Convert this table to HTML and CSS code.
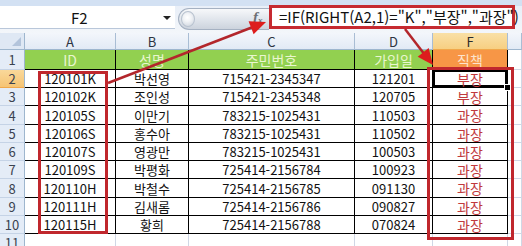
FILE: index.html
```html
<!DOCTYPE html>
<html lang="ko">
<head>
<meta charset="utf-8">
<title>직책 수식</title>
<link rel="stylesheet" href="styles.css">
</head>
<body>
<div class="sheet">
  <div class="formula-bar">
    <div class="name-box"><span class="ref">F2</span><span class="caret"></span></div>
    <div class="fx-btn"><span class="knob"></span><span class="fx">f<sub>x</sub></span></div>
    <div class="formula">=IF(RIGHT(A2,1)="K","부장","과장")</div>
  </div>

  <div class="grid">
    <div class="corner"></div>
    <div class="hd">A</div><div class="hd">B</div><div class="hd">C</div><div class="hd">D</div><div class="hd sel">F</div><div class="hd"></div>

    <div class="rh">1</div>
    <div class="c g">ID</div><div class="c g">성명</div><div class="c g">주민번호</div><div class="c g">가입일</div><div class="c o">직책</div><div class="e"></div>

    <div class="rh sel">2</div>
    <div class="c">120101K</div><div class="c">박선영</div><div class="c">715421-2345347</div><div class="c">121201</div><div class="c r active">부장</div><div class="e"></div>

    <div class="rh">3</div>
    <div class="c">120102K</div><div class="c">조인성</div><div class="c">715421-2345348</div><div class="c">120705</div><div class="c r">부장</div><div class="e"></div>

    <div class="rh">4</div>
    <div class="c">120105S</div><div class="c">이만기</div><div class="c">783215-1025431</div><div class="c">110503</div><div class="c r">과장</div><div class="e"></div>

    <div class="rh">5</div>
    <div class="c">120106S</div><div class="c">홍수아</div><div class="c">783215-1025431</div><div class="c">110502</div><div class="c r">과장</div><div class="e"></div>

    <div class="rh">6</div>
    <div class="c">120107S</div><div class="c">영광만</div><div class="c">783215-1025431</div><div class="c">100503</div><div class="c r">과장</div><div class="e"></div>

    <div class="rh">7</div>
    <div class="c">120109S</div><div class="c">박평화</div><div class="c">725414-2156784</div><div class="c">100923</div><div class="c r">과장</div><div class="e"></div>

    <div class="rh">8</div>
    <div class="c">120110H</div><div class="c">박철수</div><div class="c">725414-2156785</div><div class="c">091130</div><div class="c r">과장</div><div class="e"></div>

    <div class="rh">9</div>
    <div class="c">120111H</div><div class="c">김새롬</div><div class="c">725414-2156786</div><div class="c">090827</div><div class="c r">과장</div><div class="e"></div>

    <div class="rh">10</div>
    <div class="c">120115H</div><div class="c">황희</div><div class="c">725414-2156788</div><div class="c">070824</div><div class="c r">과장</div><div class="e"></div>

    <div class="rh">11</div>
    <div class="e"></div><div class="e"></div><div class="e"></div><div class="e"></div><div class="e"></div><div class="e"></div>
  </div>

  <!-- annotation boxes around the ID column and the result column -->
  <div class="callout callout-id"></div>
  <div class="callout callout-result"></div>

  <svg class="arrows" width="522" height="246" viewBox="0 0 522 246">
    <line x1="108" y1="83" x2="253" y2="27" class="shaft"/>
    <polygon points="266,22 253.6,34.3 248.6,21.3" class="head"/>
    <line x1="405" y1="29" x2="425" y2="55" class="shaft"/>
    <polygon points="433,65 428.7,48.1 417.7,56.7" class="head"/>
  </svg>
</div>
</body>
</html>
```

FILE: styles.css
```css
html, body {
  margin: 0;
  padding: 0;
  background: #ffffff;
}

.sheet {
  position: relative;
  width: 522px;
  height: 246px;
  overflow: hidden;
  font-family: "Noto Sans CJK KR", "Noto Sans", sans-serif;
  background: #ffffff;
}

/* ---------- formula bar ---------- */
.formula-bar {
  display: flex;
  align-items: flex-start;
  height: 33px;
  background: linear-gradient(#d3e1f3 0, #d3e1f3 6px, #e9eff8 6px, #f3f6fa 100%);
}

.name-box {
  position: relative;
  width: 175px;
  height: 23px;
  margin-top: 6px;
  background: #ffffff;
  border-bottom: 1px solid #b9c7da;
  box-sizing: border-box;
  display: flex;
  align-items: center;
}

.name-box .ref {
  margin-left: 71px;
  font-size: 15px;
  color: #111;
  line-height: 1;
}

.name-box .caret {
  position: absolute;
  left: 163px;
  top: 10px;
  width: 0;
  height: 0;
  border-left: 4px solid transparent;
  border-right: 4px solid transparent;
  border-top: 4px solid #222;
}

.fx-btn {
  position: relative;
  width: 91px;
  height: 22px;
  margin-top: 8px;
  margin-left: 3px;
  box-sizing: border-box;
  border: 1px solid #a5b1c2;
  border-right: none;
  border-radius: 11px 0 0 11px;
  background: linear-gradient(#f7f8fa, #dfe4eb 55%, #ccd3dd);
}

.fx-btn .knob {
  position: absolute;
  left: 2px;
  top: 2px;
  width: 14px;
  height: 16px;
  border-radius: 50%;
  background: radial-gradient(circle at 45% 40%, #ffffff 0, #f2f4f7 35%, #c9d0da 100%);
  border: 1px solid #b8c2cf;
  box-sizing: border-box;
}

.fx-btn .fx {
  position: absolute;
  left: 74px;
  top: 1px;
  font-family: "Liberation Serif", serif;
  font-style: italic;
  font-weight: bold;
  font-size: 15px;
  color: #6b6f75;
  line-height: 1;
}

.fx-btn .fx sub {
  font-size: 9px;
  vertical-align: -1px;
}

.formula {
  width: 246px;
  height: 24px;
  margin-top: 5px;
  box-sizing: border-box;
  border: 3px solid #c62a30;
  background: #ffffff;
  padding-left: 7px;
  font-size: 15px;
  line-height: 18px;
  color: #111;
  white-space: nowrap;
}

/* ---------- worksheet grid ---------- */
.grid {
  display: grid;
  grid-template-columns: 25px 91px 73px 166px 78px 75px 1fr;
  grid-template-rows: 17px 20px 18px 18px 19px 18px 18px 18px 19px 18px 18px 18px;
  font-size: 13px;
  color: #111;
}

.grid > div {
  box-sizing: border-box;
  display: flex;
  align-items: center;
  justify-content: center;
  white-space: nowrap;
  line-height: 1;
}

.corner {
  background: #dfe8f4;
  border-right: 1px solid #9eb6ce;
  border-bottom: 1px solid #9eb6ce;
  position: relative;
}

.corner::after {
  content: "";
  position: absolute;
  right: 3px;
  bottom: 3px;
  width: 0;
  height: 0;
  border-left: 9px solid transparent;
  border-bottom: 9px solid #b3c4db;
}

.hd {
  background: linear-gradient(#f3f6fb, #e2eaf5);
  border-right: 1px solid #a9bdd4;
  border-bottom: 1px solid #9eb6ce;
  color: #2c3442;
}

.hd.sel {
  background: linear-gradient(#f9e0a6, #f7cf82);
  border-bottom-color: #f0a84b;
  color: #2a2a2a;
}

.rh {
  background: #e4ecf7;
  border-right: 1px solid #9eb6ce;
  border-bottom: 1px solid #c5d3e6;
  color: #3a4250;
}

.rh.sel {
  background: linear-gradient(#f9d89a, #f6c474);
  border-bottom-color: #f0a84b;
}

.c {
  background: #ffffff;
  border-right: 1px solid #000;
  border-bottom: 1px solid #000;
}

.c.g {
  background: #92d050;
  color: #e9f6cf;
  font-size: 14px;
}

.c.o {
  background: #f79646;
  color: #fde3cc;
  font-size: 14px;
}

.c.r {
  color: #c0393d;
  font-size: 14px;
}

.c.active {
  position: relative;
  box-shadow: inset 0 0 0 2px #000;
}

.c.active::after {
  content: "";
  position: absolute;
  right: -4px;
  bottom: -4px;
  width: 5px;
  height: 5px;
  background: #000;
  border: 1px solid #fff;
  z-index: 2;
}

.e {
  background: #ffffff;
  border-right: 1px solid #d0d7e5;
  border-bottom: 1px solid #d0d7e5;
}

/* ---------- annotations ---------- */
.callout {
  position: absolute;
  border: 3px solid #c0272d;
  box-sizing: border-box;
  pointer-events: none;
}

.callout-id {
  left: 38px;
  top: 71px;
  width: 70px;
  height: 163px;
}

.callout-result {
  left: 427px;
  top: 67px;
  width: 87px;
  height: 173px;
}

.arrows {
  position: absolute;
  left: 0;
  top: 0;
  pointer-events: none;
}

.arrows .shaft {
  stroke: #b3262b;
  stroke-width: 2.5;
}

.arrows .head {
  fill: #dd1d1d;
}
```
